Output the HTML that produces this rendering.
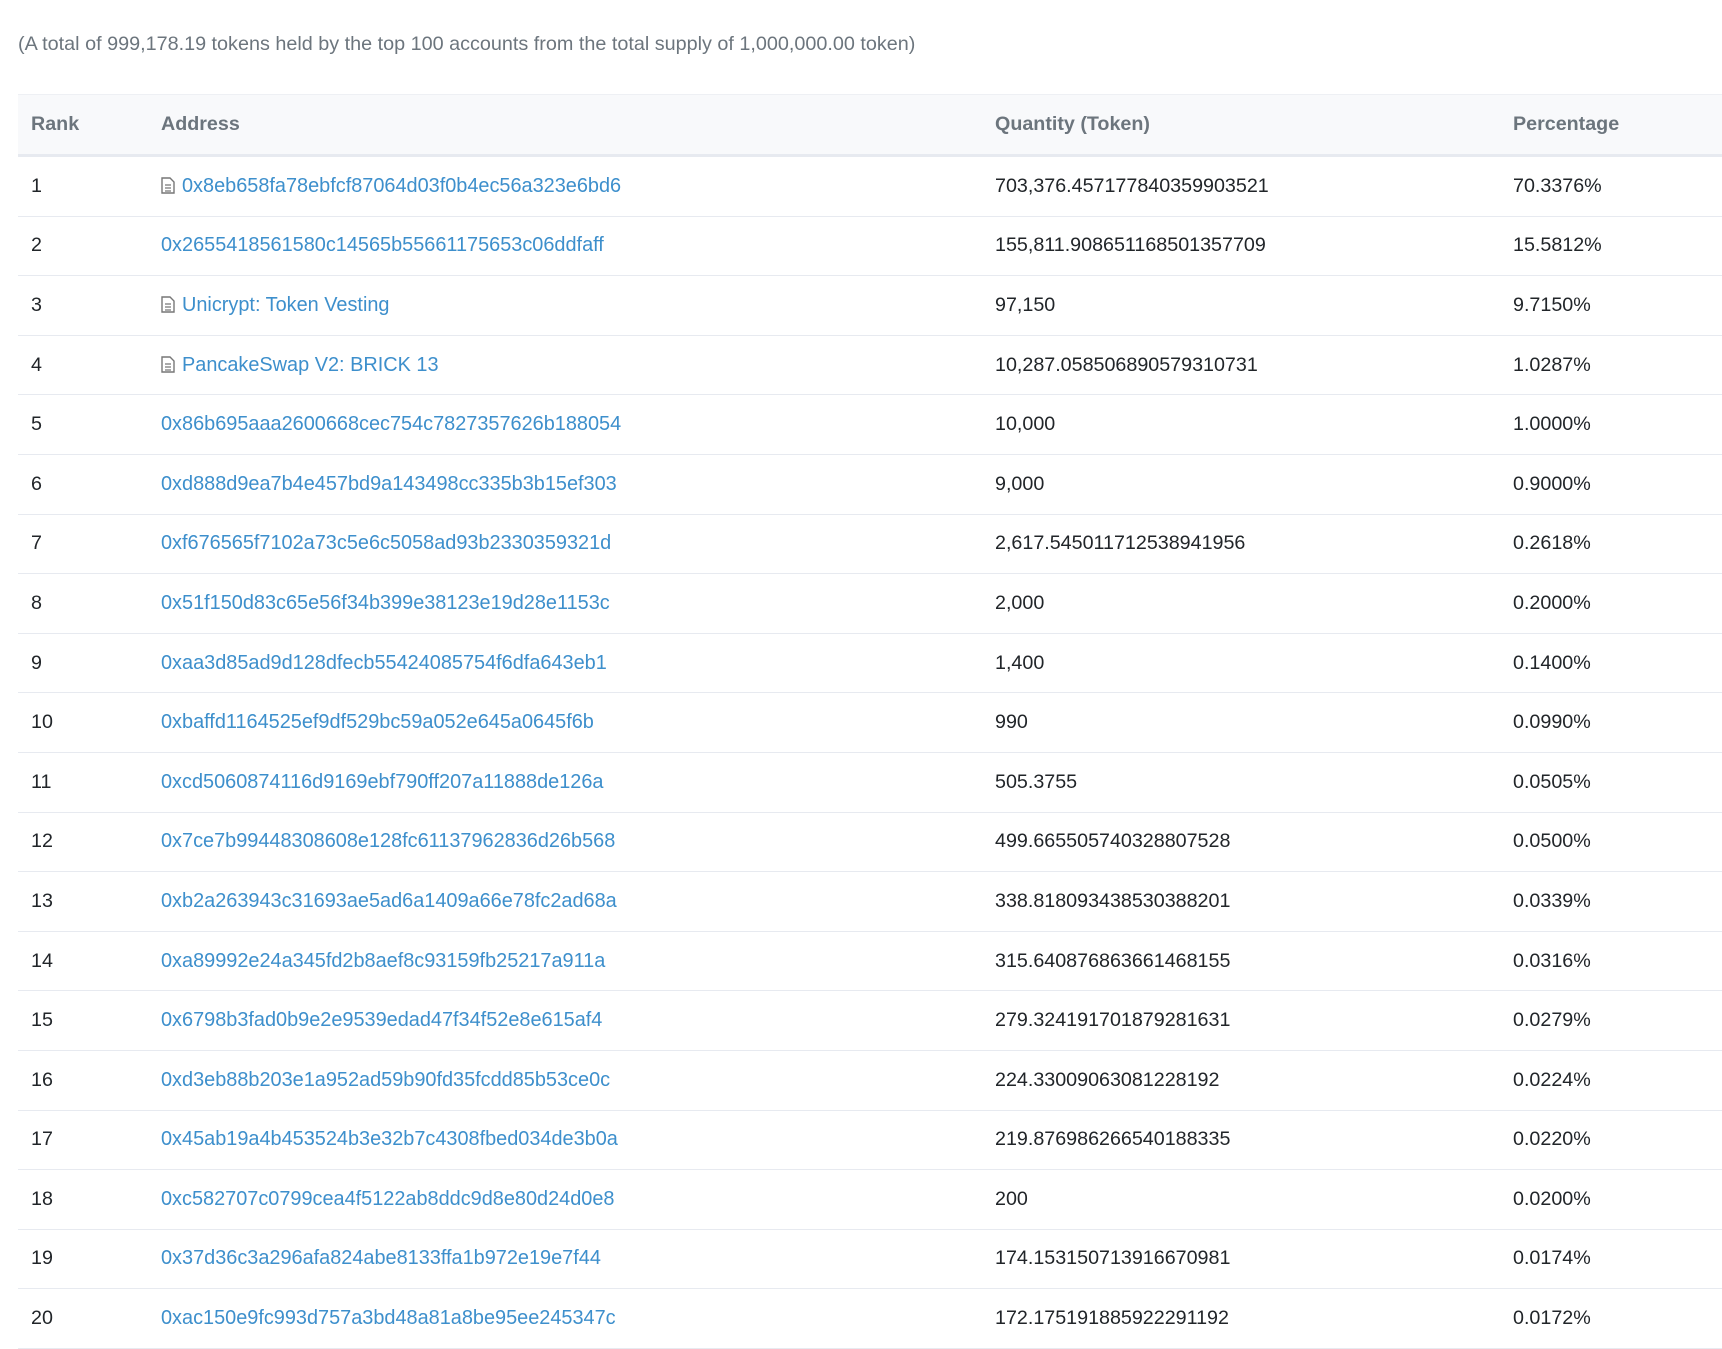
<!DOCTYPE html>
<html><head><meta charset="utf-8"><style>
body{margin:0;background:#fff;font-family:"Liberation Sans",sans-serif;width:1722px;height:1342px;overflow:hidden;}
.sub{position:absolute;left:18px;top:33px;font-size:19.8px;color:#6c757d;}
table{position:absolute;left:18px;top:94px;width:1704px;border-collapse:collapse;font-size:19.7px;color:#212529;}
th{background:#f8f9fb;color:#6c757d;font-weight:bold;text-align:left;height:59px;border-top:1px solid #eef0f4;border-bottom:3px solid #e7eaf0;padding:0;}
td{height:58.6px;border-bottom:1px solid #e7eaf0;padding:0;}
.c1{padding-left:13px;width:130px}
.c2{width:834px}
.c3{width:518px}
a{color:#3d8fcc;text-decoration:none;font-size:19.9px}
svg{vertical-align:-2px;margin-right:7px}
</style></head><body>
<div class="sub">(A total of 999,178.19 tokens held by the top 100 accounts from the total supply of 1,000,000.00 token)</div>
<table>
<tr><th class="c1">Rank</th><th class="c2">Address</th><th class="c3">Quantity (Token)</th><th>Percentage</th></tr>
<tr><td class="c1">1</td><td><svg width="14" height="17" viewBox="0 0 14 17"><path d="M1 1h8l4 4v11H1z" fill="none" stroke="#777" stroke-width="1.4"/><path d="M4 8h6M4 11h6M4 14h6" stroke="#777" stroke-width="1.2"/></svg><a>0x8eb658fa78ebfcf87064d03f0b4ec56a323e6bd6</a></td><td>703,376.457177840359903521</td><td>70.3376%</td></tr>
<tr><td class="c1">2</td><td><a>0x2655418561580c14565b55661175653c06ddfaff</a></td><td>155,811.908651168501357709</td><td>15.5812%</td></tr>
<tr><td class="c1">3</td><td><svg width="14" height="17" viewBox="0 0 14 17"><path d="M1 1h8l4 4v11H1z" fill="none" stroke="#777" stroke-width="1.4"/><path d="M4 8h6M4 11h6M4 14h6" stroke="#777" stroke-width="1.2"/></svg><a>Unicrypt: Token Vesting</a></td><td>97,150</td><td>9.7150%</td></tr>
<tr><td class="c1">4</td><td><svg width="14" height="17" viewBox="0 0 14 17"><path d="M1 1h8l4 4v11H1z" fill="none" stroke="#777" stroke-width="1.4"/><path d="M4 8h6M4 11h6M4 14h6" stroke="#777" stroke-width="1.2"/></svg><a>PancakeSwap V2: BRICK 13</a></td><td>10,287.058506890579310731</td><td>1.0287%</td></tr>
<tr><td class="c1">5</td><td><a>0x86b695aaa2600668cec754c7827357626b188054</a></td><td>10,000</td><td>1.0000%</td></tr>
<tr><td class="c1">6</td><td><a>0xd888d9ea7b4e457bd9a143498cc335b3b15ef303</a></td><td>9,000</td><td>0.9000%</td></tr>
<tr><td class="c1">7</td><td><a>0xf676565f7102a73c5e6c5058ad93b2330359321d</a></td><td>2,617.545011712538941956</td><td>0.2618%</td></tr>
<tr><td class="c1">8</td><td><a>0x51f150d83c65e56f34b399e38123e19d28e1153c</a></td><td>2,000</td><td>0.2000%</td></tr>
<tr><td class="c1">9</td><td><a>0xaa3d85ad9d128dfecb55424085754f6dfa643eb1</a></td><td>1,400</td><td>0.1400%</td></tr>
<tr><td class="c1">10</td><td><a>0xbaffd1164525ef9df529bc59a052e645a0645f6b</a></td><td>990</td><td>0.0990%</td></tr>
<tr><td class="c1">11</td><td><a>0xcd5060874116d9169ebf790ff207a11888de126a</a></td><td>505.3755</td><td>0.0505%</td></tr>
<tr><td class="c1">12</td><td><a>0x7ce7b99448308608e128fc61137962836d26b568</a></td><td>499.665505740328807528</td><td>0.0500%</td></tr>
<tr><td class="c1">13</td><td><a>0xb2a263943c31693ae5ad6a1409a66e78fc2ad68a</a></td><td>338.818093438530388201</td><td>0.0339%</td></tr>
<tr><td class="c1">14</td><td><a>0xa89992e24a345fd2b8aef8c93159fb25217a911a</a></td><td>315.640876863661468155</td><td>0.0316%</td></tr>
<tr><td class="c1">15</td><td><a>0x6798b3fad0b9e2e9539edad47f34f52e8e615af4</a></td><td>279.324191701879281631</td><td>0.0279%</td></tr>
<tr><td class="c1">16</td><td><a>0xd3eb88b203e1a952ad59b90fd35fcdd85b53ce0c</a></td><td>224.33009063081228192</td><td>0.0224%</td></tr>
<tr><td class="c1">17</td><td><a>0x45ab19a4b453524b3e32b7c4308fbed034de3b0a</a></td><td>219.876986266540188335</td><td>0.0220%</td></tr>
<tr><td class="c1">18</td><td><a>0xc582707c0799cea4f5122ab8ddc9d8e80d24d0e8</a></td><td>200</td><td>0.0200%</td></tr>
<tr><td class="c1">19</td><td><a>0x37d36c3a296afa824abe8133ffa1b972e19e7f44</a></td><td>174.153150713916670981</td><td>0.0174%</td></tr>
<tr><td class="c1">20</td><td><a>0xac150e9fc993d757a3bd48a81a8be95ee245347c</a></td><td>172.175191885922291192</td><td>0.0172%</td></tr>
</table>
</body></html>
